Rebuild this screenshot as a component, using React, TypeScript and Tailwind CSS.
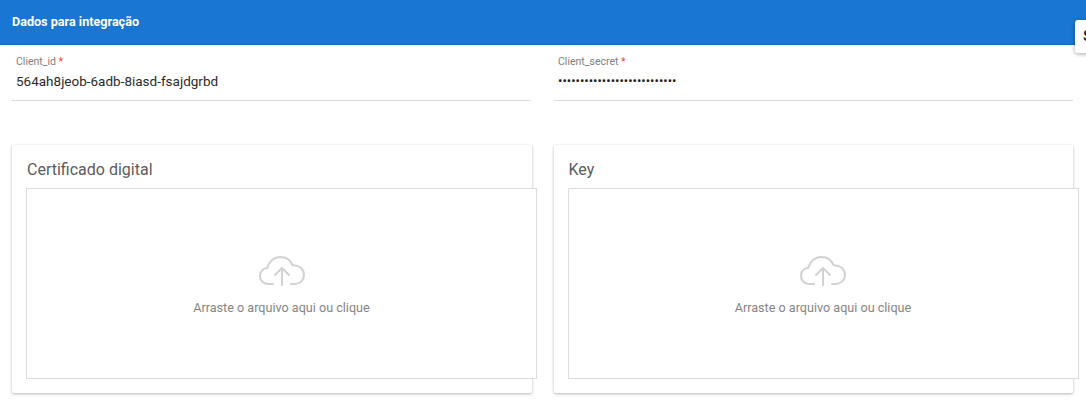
import React from "react";

function Field({ label, value, dots }: { label: string; value: string; dots?: boolean }) {
  return (
    <div className="flex-1 min-w-0 h-[56px] border-b border-[#dcdcdc] pl-1">
      <div className="pt-[11px] text-[10.5px] leading-[12px] text-[#808080]">
        {label} <span className="text-[#f44336]">*</span>
      </div>
      <div className={dots ? "mt-[3px] text-[13px] leading-[20px] text-[#212121]" : "mt-[3px] text-[13.5px] leading-[20px] text-[#2b2b2b]"}>
        {value}
      </div>
    </div>
  );
}

function Card({ title }: { title: string }) {
  return (
    <div className="flex-1 min-w-0 h-[248px] bg-white rounded-[2px] shadow-[0_1px_3px_rgba(0,0,0,0.3)] pl-[14px] pt-[14px]">
      <div className="h-[29px] pl-px text-[16px] leading-[21px] text-[#5c5c5c]">{title}</div>
      <div className="w-[511px] h-[191px] bg-white border border-[#dddddd] flex flex-col items-center pt-[65px]">
        <svg width="48" height="34" viewBox="0 0 48 34" fill="none" stroke="#d2d2d2" strokeWidth="2" strokeLinecap="round" strokeLinejoin="round">
          <path d="M15 30H10.5C5.5 30 2 26.5 2 22c0-4.3 3-7.6 7.3-8.2C10.8 7.5 16 3 22.5 3c5.5 0 10.2 3.2 12 8.2 6.5-.4 11.5 4 11.5 9.6 0 5.3-4 9.2-9.5 9.2H33" />
          <path d="M24 31V15M17 21l7-7 7 7" />
        </svg>
        <div className="mt-[12px] text-[12.6px] leading-[16px] text-[#858585]">Arraste o arquivo aqui ou clique</div>
      </div>
    </div>
  );
}

export default function App() {
  return (
    <div className="relative w-[1086px] h-[405px] overflow-hidden bg-white font-['Roboto',sans-serif]">
      <div className="h-[45px] bg-[#1976d2] border-b border-[#1769c0] flex items-center px-3 text-[12.6px] font-bold text-white">
        Dados para integração
      </div>
      <div className="flex gap-[23px] pl-3 pr-[13px]">
        <Field label="Client_id" value="564ah8jeob-6adb-8iasd-fsajdgrbd" />
        <Field label="Client_secret" value="•••••••••••••••••••••••••••" dots />
      </div>
      <div className="flex gap-[22px] pl-3 pr-[13px] mt-[44px]">
        <Card title="Certificado digital" />
        <Card title="Key" />
      </div>
      <div className="absolute left-[1075px] top-[20px] w-[30px] h-[33px] bg-white rounded-[3px] shadow-[0_1px_4px_rgba(0,0,0,0.35)] pl-2 pt-[6px] text-[14px] font-bold text-[#212121]">
        $
      </div>
    </div>
  );
}
